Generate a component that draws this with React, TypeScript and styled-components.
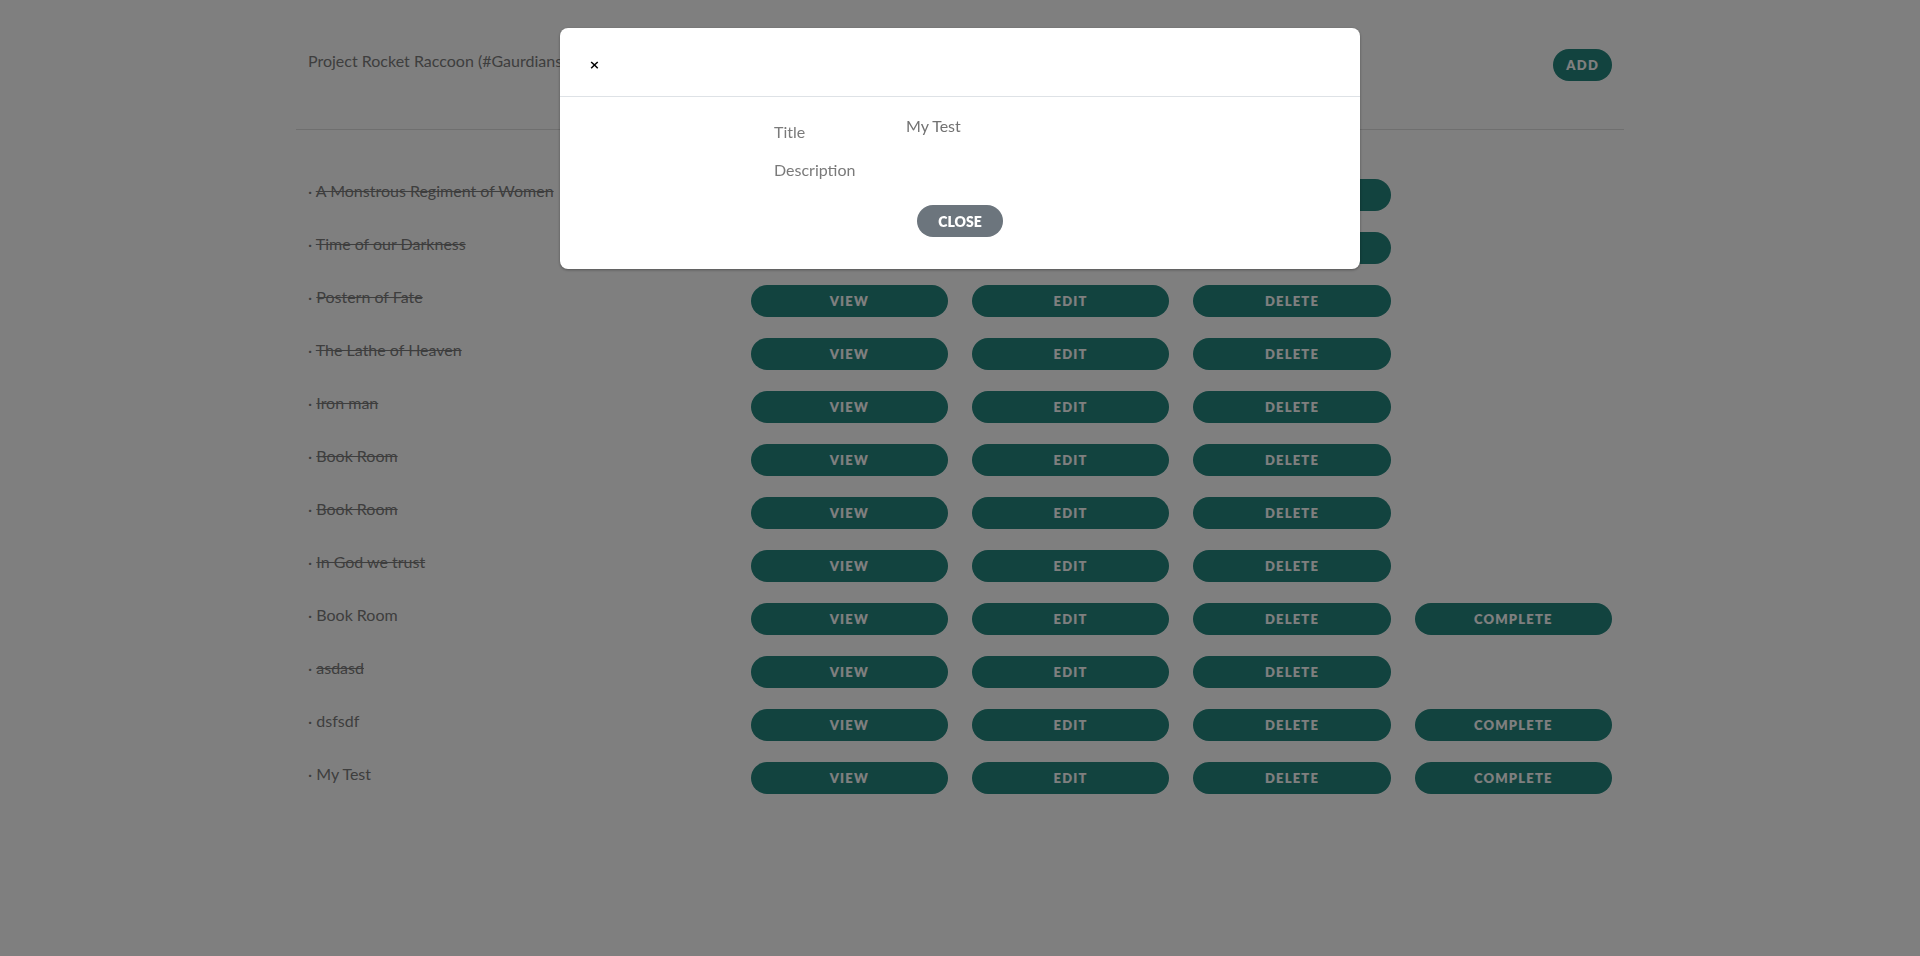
import React from "react";
import styled, { createGlobalStyle } from "styled-components";

const GlobalStyle = createGlobalStyle`
  html, body {
    margin: 0;
    padding: 0;
    background: #ffffff;
    font-family: "Segoe UI", Lato, "Liberation Sans", sans-serif;
  }
  * { box-sizing: border-box; }
`;

const Page = styled.div`
  width: 1328px;
  margin: 0 auto;
  min-height: 956px;
`;

const Header = styled.header`
  display: flex;
  justify-content: space-between;
  align-items: flex-start;
  padding: 49px 12px 48px;
  border-bottom: 1px solid #dedede;
`;

const ProjectName = styled.h1`
  margin: 0;
  font-size: 16px;
  font-weight: 400;
  line-height: 24px;
  color: #7c7c7c;
`;

const PillButton = styled.button<{ $wide?: boolean }>`
  height: 32px;
  width: ${(p) => (p.$wide ? "100%" : "auto")};
  padding: 0 13px;
  border: none;
  border-radius: 16px;
  background: #24867e;
  color: #ffffff;
  font-family: "Segoe UI", Lato, "Liberation Sans", sans-serif;
  font-size: 13px;
  font-weight: 800;
  letter-spacing: 1.2px;
  text-transform: uppercase;
  cursor: pointer;
`;

const List = styled.ul`
  list-style: none;
  margin: 0;
  padding: 49px 0 0;
`;

const Row = styled.li`
  display: grid;
  grid-template-columns: 4fr 2fr 2fr 2fr 2fr;
  height: 32px;
  margin-bottom: 21px;
`;

const Cell = styled.div`
  padding: 0 12px;
`;

const ItemText = styled.div`
  padding: 0 12px;
  font-size: 16px;
  line-height: 24px;
  color: #7c7c7c;
`;

const ItemTitle = styled.span<{ $done: boolean }>`
  text-decoration: ${(p) => (p.$done ? "line-through" : "none")};
`;

const Overlay = styled.div`
  position: fixed;
  inset: 0;
  background: rgba(0, 0, 0, 0.5);
  display: flex;
  justify-content: center;
  align-items: flex-start;
  padding-top: 28px;
`;

const Modal = styled.div`
  width: 800px;
  background: #ffffff;
  border-radius: 8px;
  box-shadow: 0 1px 3px rgba(0, 0, 0, 0.35);
  overflow: hidden;
`;

const ModalHeader = styled.div`
  height: 69px;
  display: flex;
  align-items: center;
  padding: 4px 28px 0 29px;
  border-bottom: 1px solid #dee2e6;
`;

const CloseX = styled.button`
  border: none;
  background: transparent;
  padding: 0;
  font-family: "DejaVu Sans", sans-serif;
  font-size: 13px;
  font-weight: 700;
  color: #000000;
  cursor: pointer;
`;

const ModalBody = styled.div`
  padding: 23px 0 32px;
  display: flex;
  flex-direction: column;
  align-items: center;
`;

const Details = styled.dl`
  display: grid;
  grid-template-columns: 132px 240px;
  row-gap: 14px;
  margin: 0 0 23px;
  font-size: 16px;
  line-height: 24px;
  color: #7a7a7a;
`;

const Label = styled.dt`
  margin: 0;
`;

const Value = styled.dd<{ $raise?: boolean }>`
  margin: ${(p) => (p.$raise ? "-6px 0 0" : "0")};
  color: #727272;
`;

const SecondaryButton = styled.button`
  width: 86px;
  height: 32px;
  border: none;
  border-radius: 16px;
  background: #6c757d;
  color: #ffffff;
  font-family: "Segoe UI", Lato, "Liberation Sans", sans-serif;
  font-size: 14px;
  font-weight: 800;
  cursor: pointer;
`;

type Item = { title: string; done: boolean };

const items: Item[] = [
  { title: "A Monstrous Regiment of Women", done: true },
  { title: "Time of our Darkness", done: true },
  { title: "Postern of Fate", done: true },
  { title: "The Lathe of Heaven", done: true },
  { title: "Iron man", done: true },
  { title: "Book Room", done: true },
  { title: "Book Room", done: true },
  { title: "In God we trust", done: true },
  { title: "Book Room", done: false },
  { title: "asdasd", done: true },
  { title: "dsfsdf", done: false },
  { title: "My Test", done: false },
];

export default function App() {
  return (
    <>
      <GlobalStyle />
      <Page>
        <Header>
          <ProjectName>Project Rocket Raccoon (#Gaurdians of the Galaxy)</ProjectName>
          <PillButton>Add</PillButton>
        </Header>
        <List>
          {items.map((item, i) => (
            <Row key={i}>
              <ItemText>
                · <ItemTitle $done={item.done}>{item.title}</ItemTitle>
              </ItemText>
              <Cell>
                <PillButton $wide>View</PillButton>
              </Cell>
              <Cell>
                <PillButton $wide>Edit</PillButton>
              </Cell>
              <Cell>
                <PillButton $wide>Delete</PillButton>
              </Cell>
              <Cell>{!item.done && <PillButton $wide>Complete</PillButton>}</Cell>
            </Row>
          ))}
        </List>
      </Page>
      <Overlay>
        <Modal>
          <ModalHeader>
            <CloseX aria-label="close">×</CloseX>
          </ModalHeader>
          <ModalBody>
            <Details>
              <Label>Title</Label>
              <Value $raise>My Test</Value>
              <Label>Description</Label>
              <Value />
            </Details>
            <SecondaryButton>CLOSE</SecondaryButton>
          </ModalBody>
        </Modal>
      </Overlay>
    </>
  );
}
